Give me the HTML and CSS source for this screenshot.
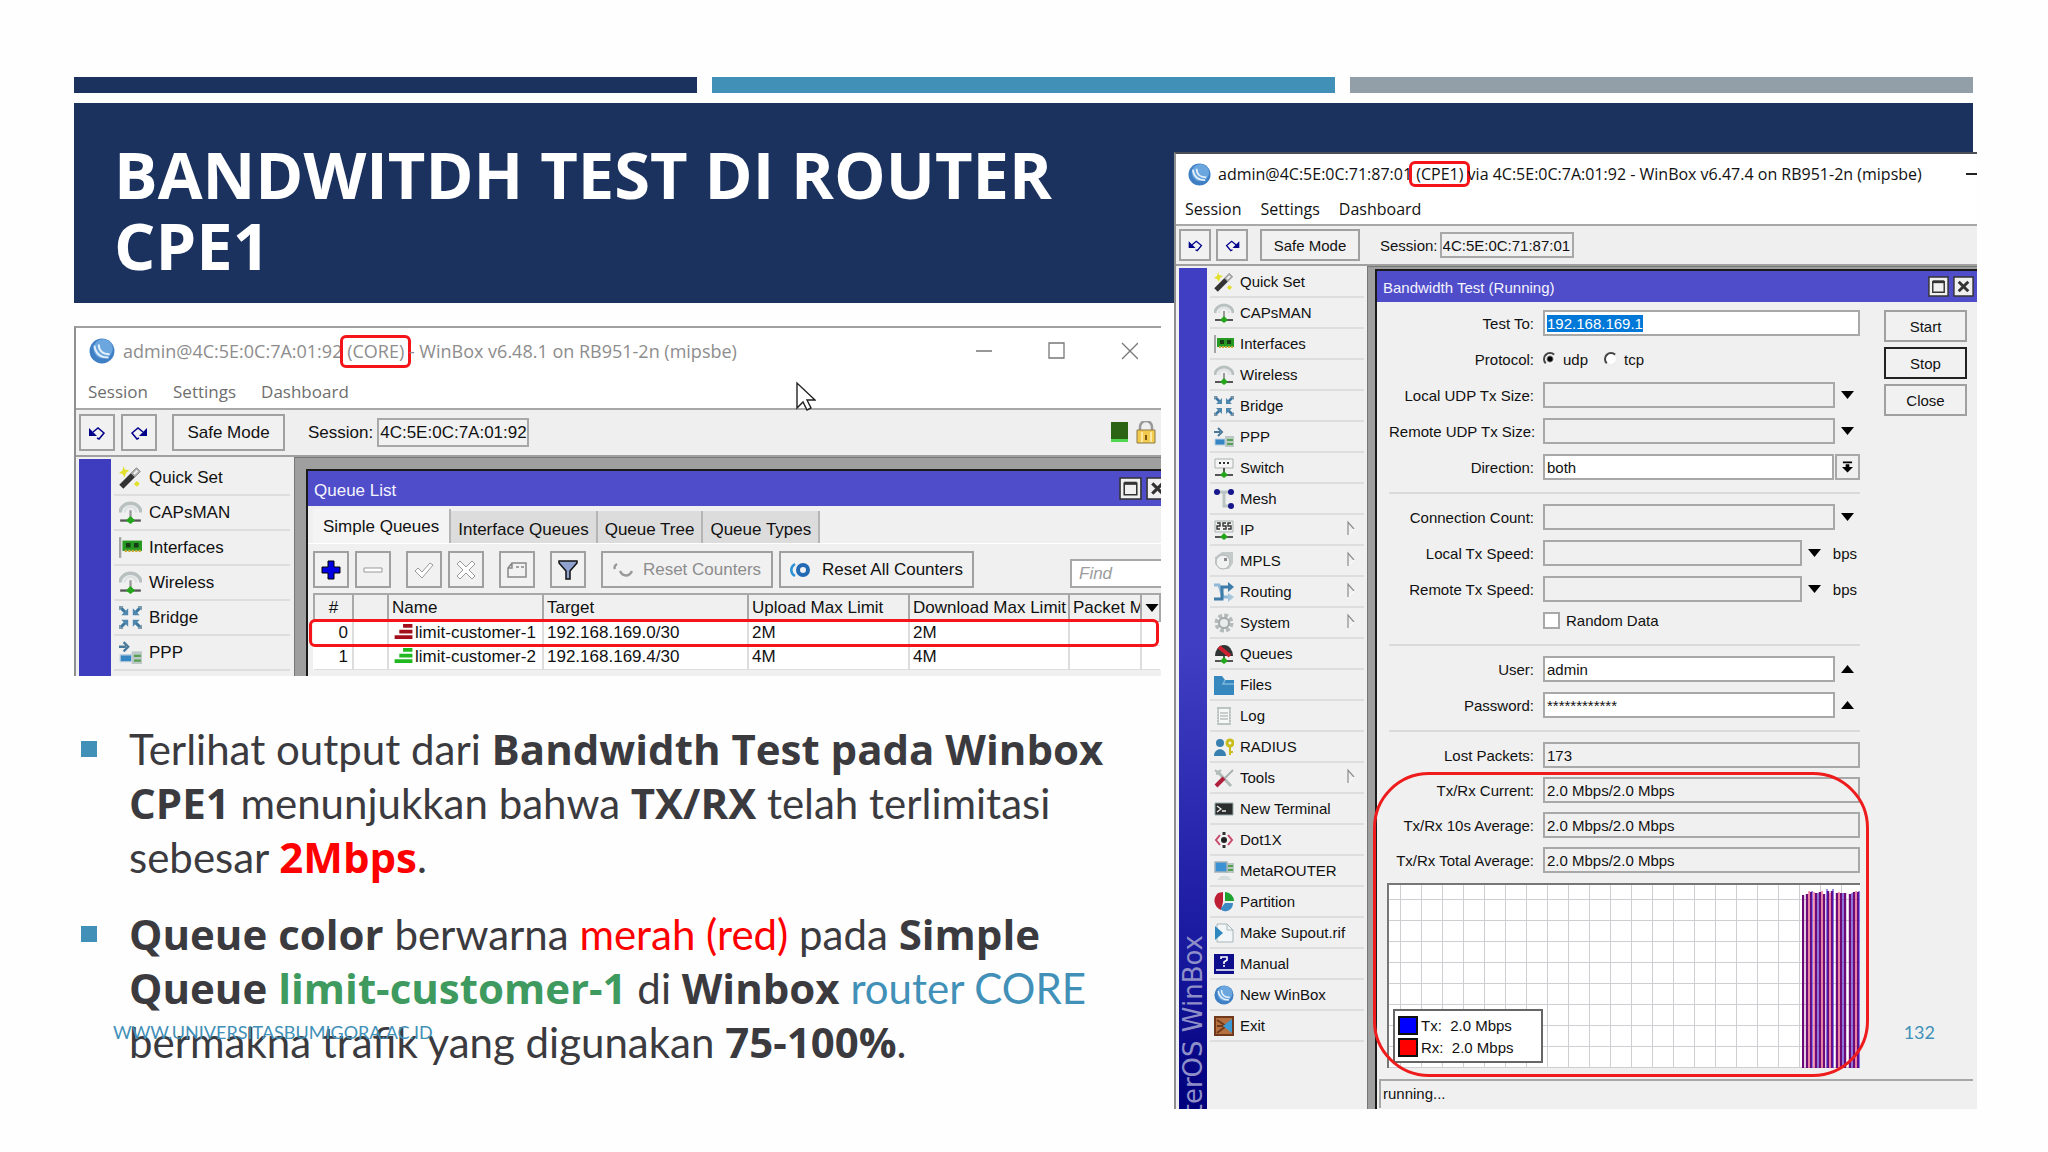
FILE: index.html
```html
<!DOCTYPE html>
<html lang="id">
<head>
  <meta charset="UTF-8">
  <meta name="viewport" content="width=device-width, initial-scale=1.0">
  <title>Bandwitdh Test di Router CPE1</title>
  <link rel="stylesheet" href="styles.css">
</head>
<body>
  <!-- Icon sprite -->
  <svg class="sprite" aria-hidden="true">
    <symbol id="i-logo" viewBox="0 0 24 24">
      <circle cx="12" cy="12" r="11.5" fill="#3f7fc4"/>
      <circle cx="13" cy="10" r="9" fill="#6ba6de"/>
      <path d="M5 7c1 7 5 11 13 11M9 6c0 6 4 9 10 9" fill="none" stroke="#e4f1fb" stroke-width="1.8"/>
    </symbol>
    <symbol id="i-undo" viewBox="0 0 20 20">
      <path d="M2 5v8h8z" fill="#00008b"/>
      <path d="M6 9l5-4 6 5-5 6-2-1" fill="none" stroke="#00008b" stroke-width="1.5"/>
    </symbol>
    <symbol id="i-redo" viewBox="0 0 20 20">
      <path d="M18 5v8h-8z" fill="#00008b"/>
      <path d="M14 9L9 5l-6 5 5 6 2-1" fill="none" stroke="#00008b" stroke-width="1.5"/>
    </symbol>
    <symbol id="i-wand" viewBox="0 0 20 20">
      <path d="M2 18L17 3" stroke="#333" stroke-width="5"/>
      <path d="M12 8l5-5" stroke="#aaa" stroke-width="5"/>
      <path d="M13 7l3-3" stroke="#eee" stroke-width="2"/>
      <path d="M4 0l1 3 4 1-3 2-1 4-2-3-3-1 3-2zM15 13l3 2-2 3-3-2z" fill="#e3e02c"/>
    </symbol>
    <symbol id="i-wifi" viewBox="0 0 20 20">
      <path d="M1 10a9 8 0 0 1 18 0" fill="none" stroke="#b9c0c0" stroke-width="3"/>
      <path d="M5 10a5 5 0 0 1 10 0" fill="none" stroke="#dde2e2" stroke-width="2"/>
      <path d="M10 8v8" stroke="#999" stroke-width="2"/>
      <path d="M1 17h18" stroke="#555" stroke-width="2"/>
      <path d="M6 17l4-4 4 4-4 3z" fill="#25a51c"/>
    </symbol>
    <symbol id="i-card" viewBox="0 0 20 20">
      <path d="M1 1v18" stroke="#a5a5a5" stroke-width="2"/>
      <path d="M3 4h17v9H3z" fill="#269a23"/>
      <path d="M6 6h4v4H6zM13 6h4v4h-4z" fill="#173d16"/>
      <path d="M5 13h14" stroke="#caa93a" stroke-width="2" stroke-dasharray="2 1"/>
    </symbol>
    <symbol id="i-bridge" viewBox="0 0 20 20">
      <path d="M1 1l6 6M19 1l-6 6M1 19l6-6M19 19l-6-6" stroke="#3d779f" stroke-width="2.6"/>
      <path d="M8 2v6H2zM12 2v6h6zM8 18v-6H2zM12 18v-6h6z" fill="#4f87ae"/>
      <path d="M0 0h4L0 4zM20 0h-4l4 4zM0 20h4l-4-4zM20 20h-4l4-4z" fill="#7c98a9"/>
    </symbol>
    <symbol id="i-ppp" viewBox="0 0 20 20">
      <path d="M0 5h6M4 1l4 4-4 4" fill="none" stroke="#4a7898" stroke-width="2"/>
      <path d="M11 9h9v11h-9z" fill="#bcc8c6"/>
      <path d="M13 13h6M13 17h6" stroke="#58a052" stroke-width="2"/>
      <path d="M1 12h10v6H1z" fill="#3686c4" stroke="#bcd0df"/>
    </symbol>
    <symbol id="i-switch" viewBox="0 0 20 20">
      <path d="M1 1h18v9H1z" fill="#f5f5f5" stroke="#a9b2b0"/>
      <path d="M5 5h2M9 5h2M13 5h2" stroke="#333" stroke-width="2"/>
      <path d="M10 10v6M1 17h18" stroke="#555" stroke-width="2"/>
      <path d="M6 17l4-4 4 4-4 3z" fill="#25a51c"/>
    </symbol>
    <symbol id="i-mesh" viewBox="0 0 20 20">
      <path d="M3 3h14M10 3v14h7" fill="none" stroke="#b9c4c3" stroke-width="3"/>
      <circle cx="3" cy="3" r="3" fill="#15158c"/>
      <circle cx="17" cy="3" r="3" fill="#15158c"/>
      <circle cx="17" cy="17" r="3" fill="#15158c"/>
    </symbol>
    <symbol id="i-ip" viewBox="0 0 20 20">
      <path d="M1 1h18v11H1z" fill="#edf0ef" stroke="#a9b2b0"/>
      <path d="M3 3h3v3H3v3h3M12 3H9v3h3v3H9M17 3h-3v3h3v3h-3" fill="none" stroke="#333" stroke-width="1.4"/>
      <path d="M1 17h18" stroke="#555" stroke-width="2"/>
      <path d="M6 17l4-4 4 4-4 3z" fill="#25a51c"/>
    </symbol>
    <symbol id="i-mpls" viewBox="0 0 20 20">
      <path d="M8 1h11v11l-4 6H6l-5-5V6z" fill="#c3c9c8"/>
      <circle cx="9" cy="11" r="7" fill="#f0f2f2" stroke="#adb4b3"/>
      <path d="M10 7h3v3h-3z" fill="#888"/>
    </symbol>
    <symbol id="i-routing" viewBox="0 0 20 20">
      <path d="M0 3h5l4 12h7" fill="none" stroke="#8fb9d6" stroke-width="3"/>
      <path d="M0 17h8V5h7" fill="none" stroke="#3d7ba8" stroke-width="3"/>
      <path d="M14 0l6 5-6 5z" fill="#3d7ba8"/>
      <path d="M14 11l6 4-6 5z" fill="#a4c5da"/>
    </symbol>
    <symbol id="i-gear" viewBox="0 0 20 20">
      <circle cx="10" cy="10" r="7" fill="none" stroke="#b3bab9" stroke-width="5" stroke-dasharray="3.5 2"/>
      <circle cx="10" cy="10" r="5" fill="#e9ecec" stroke="#a3aaa9" stroke-width="2"/>
    </symbol>
    <symbol id="i-queues" viewBox="0 0 20 20">
      <path d="M1 12a9 11 0 0 1 18 0z" fill="#303434"/>
      <path d="M5 3l11 9" stroke="#cf2030" stroke-width="4"/>
      <path d="M1 17h18M10 12v4" stroke="#555" stroke-width="2"/>
      <path d="M6 17l4-4 4 4-4 3z" fill="#25a51c"/>
    </symbol>
    <symbol id="i-files" viewBox="0 0 20 20">
      <path d="M0 1h8l3 4h9v15H0z" fill="#3687bd"/>
      <path d="M11 5l-2 4h11" fill="none" stroke="#7cb8de" stroke-width="1.5"/>
    </symbol>
    <symbol id="i-log" viewBox="0 0 20 20">
      <path d="M3 1h14v18H3z" fill="#bcc4c1"/>
      <path d="M5 3h10v14H5z" fill="#f6f8f7"/>
      <path d="M3 4v14M17 4v14" stroke="#f0f0f0" stroke-width="1.5" stroke-dasharray="1 2"/>
      <path d="M6 7h8M6 10h8M6 13h8" stroke="#9ca5a2"/>
    </symbol>
    <symbol id="i-radius" viewBox="0 0 20 20">
      <circle cx="6" cy="6" r="4" fill="#3880b0"/>
      <path d="M0 19c0-9 12-9 12 0z" fill="#3880b0"/>
      <circle cx="16" cy="6" r="3" fill="none" stroke="#c8bd1c" stroke-width="3"/>
      <path d="M16 9v9M16 15h3" stroke="#c8bd1c" stroke-width="2"/>
    </symbol>
    <symbol id="i-tools" viewBox="0 0 20 20">
      <path d="M3 3l14 15" stroke="#b2bbb9" stroke-width="3"/>
      <path d="M1 2l3 3 3-3M2 6l4-1" stroke="#b2bbb9" stroke-width="2" fill="none"/>
      <path d="M19 2l-9 9" stroke="#aab2b0" stroke-width="2"/>
      <path d="M2 18l8-8" stroke="#b01f3c" stroke-width="4"/>
    </symbol>
    <symbol id="i-term" viewBox="0 0 20 20">
      <path d="M1 4h18v12H1z" fill="#2b2d2d" stroke="#9aa" stroke-width="1"/>
      <path d="M3 7l4 3-4 3M8 12h4" fill="none" stroke="#eee" stroke-width="1.3"/>
    </symbol>
    <symbol id="i-dot1x" viewBox="0 0 20 20">
      <path d="M6 5l-4 5 4 5M14 5l4 5-4 5" fill="none" stroke="#c8476a" stroke-width="2"/>
      <circle cx="10" cy="10" r="3" fill="#222"/>
      <path d="M10 2v3M10 15v3" stroke="#333" stroke-width="3"/>
    </symbol>
    <symbol id="i-meta" viewBox="0 0 20 20">
      <path d="M12 2h8v10h-8z" fill="#b7c7c2"/>
      <path d="M14 5h5M14 9h5" stroke="#54a052" stroke-width="2"/>
      <path d="M1 1h12v10H1z" fill="#3b91d2" stroke="#a3b3bb" stroke-width="1.5"/>
      <path d="M7 15h7l4 4H3z" fill="#d7dddc"/>
    </symbol>
    <symbol id="i-part" viewBox="0 0 20 20">
      <path d="M9 10L7 18A10 10 0 0 1 4 1L9 0z" fill="#bd2035"/>
      <path d="M11 0a9 9 0 0 1 9 9h-9z" fill="#1fa22f"/>
      <path d="M19 11c0 10-13 10-12 5l4-5z" fill="#3b8ac4"/>
    </symbol>
    <symbol id="i-supout" viewBox="0 0 20 20">
      <path d="M3 1h10l6 6v12H3z" fill="#f2f6f6" stroke="#a8b6b8"/>
      <path d="M13 1v6h6" fill="none" stroke="#a8b6b8"/>
      <path d="M1 3l8 7-8 7z" fill="#2e87bd"/>
    </symbol>
    <symbol id="i-manual" viewBox="0 0 20 20">
      <path d="M0 0h20v20H0z" fill="#0e0e8c"/>
      <path d="M7 5V3h6v3l-3 2v2M9 12h2M2 16h18" fill="none" stroke="#fff" stroke-width="1.6"/>
    </symbol>
    <symbol id="i-exit" viewBox="0 0 20 20">
      <path d="M0 0h20v20H0z" fill="#70391b"/>
      <path d="M2 2h16v16H2z" fill="#b5703f"/>
      <path d="M3 4l9 6-9 7M3 10h6" fill="none" stroke="#70391b" stroke-width="2"/>
      <path d="M9 10l9-7v14z" fill="#3b9ad6"/>
    </symbol>
    <symbol id="i-sub" viewBox="0 0 10 16">
      <path d="M2 15V2l6 7" fill="none" stroke="#8d8d8d" stroke-width="1.2"/>
      <path d="M8 9l-5 5" stroke="#fff"/>
    </symbol>
    <symbol id="i-down" viewBox="0 0 13 8"><path d="M0 0h13L6.500 8z" fill="#000"/></symbol>
    <symbol id="i-up" viewBox="0 0 13 8"><path d="M0 8h13L6.500 0z" fill="#000"/></symbol>
    <symbol id="i-restore" viewBox="0 0 22 22">
      <path d="M1 1h20v20H1z" fill="#f0f0f0" stroke="#333" stroke-width="1.5"/>
      <path d="M5 6h12v11H5z" fill="none" stroke="#333" stroke-width="1.5"/>
      <path d="M5 6h12" stroke="#333" stroke-width="3"/>
    </symbol>
    <symbol id="i-close" viewBox="0 0 22 22">
      <path d="M1 1h20v20H1z" fill="#f0f0f0" stroke="#333" stroke-width="1.5"/>
      <path d="M6 6l10 10M16 6L6 16" stroke="#333" stroke-width="3"/>
    </symbol>
  </svg>

  <main class="slide">
    <div class="bars">
      <div class="bar bar-navy"></div>
      <div class="bar bar-blue"></div>
      <div class="bar bar-gray"></div>
    </div>

    <div class="stage">
      <header class="heading">
        <h1>BANDWITDH TEST DI ROUTER CPE1</h1>
      </header>

      <!-- WinBox CORE -->
      <section class="win win-core">
        <div class="titlebar">
          <svg class="logo"><use href="#i-logo"/></svg>
          <span class="title">admin@4C:5E:0C:7A:01:92 <span class="mark">(CORE)</span> - WinBox v6.48.1 on RB951-2n (mipsbe)</span>
          <svg class="controls" viewBox="0 0 162 20" fill="none" stroke="#777" stroke-width="1.300">
            <path d="M0 10h16M73 2h15v15H73zM146 2l16 16M162 2l-16 16"/>
          </svg>
        </div>
        <nav class="menu"><a href="#">Session</a><a href="#">Settings</a><a href="#">Dashboard</a></nav>
        <div class="toolbar">
          <button class="btn sq" aria-label="Undo"><svg><use href="#i-undo"/></svg></button>
          <button class="btn sq" aria-label="Redo"><svg><use href="#i-redo"/></svg></button>
          <button class="btn safe">Safe Mode</button>
          <label for="core-session">Session:</label>
          <input id="core-session" class="session" type="text" value="4C:5E:0C:7A:01:92" readonly>
          <svg class="status" viewBox="0 0 46 24">
            <path d="M0 1h17v20H0z" fill="#2a6414"/>
            <path d="M0 18h17v3H0z" fill="#4fd84f"/>
            <path d="M29 11V6a6 6 0 0 1 12 0v5" fill="none" stroke="#999" stroke-width="2.500"/>
            <path d="M26 9h18v13H26z" fill="#f2cb4e" stroke="#8c7a45"/>
            <path d="M31 11v10M40 11v10" stroke="#fae9a2" stroke-width="2"/>
            <path d="M35 14v5" stroke="#7a5410" stroke-width="2"/>
          </svg>
        </div>
        <div class="body">
          <div class="strip"></div>
          <nav class="side">
            <a href="#"><svg><use href="#i-wand"/></svg>Quick Set</a>
            <a href="#"><svg><use href="#i-wifi"/></svg>CAPsMAN</a>
            <a href="#"><svg><use href="#i-card"/></svg>Interfaces</a>
            <a href="#"><svg><use href="#i-wifi"/></svg>Wireless</a>
            <a href="#"><svg><use href="#i-bridge"/></svg>Bridge</a>
            <a href="#"><svg><use href="#i-ppp"/></svg>PPP</a>
          </nav>
          <div class="mdi">
            <div class="child">
              <div class="child-title">
                <span>Queue List</span>
                <button aria-label="Maximize"><svg><use href="#i-restore"/></svg></button>
                <button aria-label="Close"><svg><use href="#i-close"/></svg></button>
              </div>
              <div class="tabs">
                <button class="tab active">Simple Queues</button>
                <button class="tab">Interface Queues</button>
                <button class="tab">Queue Tree</button>
                <button class="tab">Queue Types</button>
              </div>
              <div class="tools">
                <button class="btn sq" aria-label="Add"><svg viewBox="0 0 20 20"><path d="M7 1h6v6h6v6h-6v6H7v-6H1V7h6z" fill="#0000e0" stroke="#000"/></svg></button>
                <button class="btn sq" aria-label="Remove"><svg viewBox="0 0 20 20"><path d="M1 8h18v4H1z" fill="#fff" stroke="#999"/></svg></button>
                <button class="btn sq lead" aria-label="Enable"><svg viewBox="0 0 20 20"><path d="M1 11l3-3 4 4 8-9 3 2L8 18z" fill="#fff" stroke="#999"/></svg></button>
                <button class="btn sq" aria-label="Disable"><svg viewBox="0 0 20 20"><path d="M1 4l3-3 6 6 6-6 3 3-6 6 6 6-3 3-6-6-6 6-3-3 6-6z" fill="#fff" stroke="#999"/></svg></button>
                <button class="btn sq lead" aria-label="Comment"><svg viewBox="0 0 20 20"><path d="M5 3h14v14H1V8zM5 3v5H1M9 7h3M14 7h3" fill="none" stroke="#888" stroke-width="1.500"/></svg></button>
                <button class="btn sq lead" aria-label="Filter"><svg viewBox="0 0 20 20"><path d="M1 1h18v2l-7 8v8H8v-8L1 3z" fill="#8fa2cf" stroke="#111" stroke-width="1.500"/></svg></button>
                <button class="btn reset lead" disabled><svg viewBox="0 0 20 20"><path d="M4 4C2 5 1 7 2 9M7 11c3 6 9 6 12 0" fill="none" stroke="#999" stroke-width="2.500"/></svg>Reset Counters</button>
                <button class="btn reset reset-all"><svg viewBox="0 0 20 20"><path d="M5 4C0 7 0 13 5 16" fill="none" stroke="#2b93d6" stroke-width="2.500"/><circle cx="13" cy="10" r="5" fill="none" stroke="#2269b4" stroke-width="4"/></svg>Reset All Counters</button>
                <input class="find" type="text" placeholder="Find" aria-label="Find">
              </div>
              <div class="table-wrap">
                <table>
                  <colgroup><col class="c-num"><col class="c-flag"><col class="c-name"><col class="c-target"><col class="c-up"><col class="c-down"><col><col class="c-arrow"></colgroup>
                  <thead>
                    <tr><th class="num">#</th><th></th><th>Name</th><th>Target</th><th>Upload Max Limit</th><th>Download Max Limit</th><th>Packet M</th><th class="pick"><svg><use href="#i-down"/></svg></th></tr>
                  </thead>
                  <tbody>
                    <tr><td class="num">0</td><td></td><td class="name"><svg viewBox="0 0 20 16" fill="#a3101c"><path d="M9 0h10v4H9zM5 6h14v4H5zM0 12h19v4H0z"/></svg>limit-customer-1</td><td>192.168.169.0/30</td><td>2M</td><td>2M</td><td></td><td></td></tr>
                    <tr><td class="num">1</td><td></td><td class="name"><svg viewBox="0 0 20 16" fill="#22b822"><path d="M9 0h10v4H9zM5 6h14v4H5zM0 12h19v4H0z"/></svg>limit-customer-2</td><td>192.168.169.4/30</td><td>4M</td><td>4M</td><td></td><td></td></tr>
                  </tbody>
                </table>
                <div class="mark-row"></div>
              </div>
            </div>
          </div>
        </div>
        <svg class="cursor" viewBox="0 0 20 30"><path d="M1 1v25l6-6 4 8 4-2-4-8h8z" fill="#fff" stroke="#222" stroke-width="1.400"/></svg>
      </section>

      <ul class="points">
        <li>Terlihat output dari <b>Bandwidth Test pada Winbox CPE1</b> menunjukkan bahwa <b>TX/RX</b> telah terlimitasi sebesar <b class="red">2Mbps</b>.</li>
        <li><b>Queue color</b> berwarna <span class="red">merah (red)</span> pada <b>Simple Queue <span class="green">limit-customer-1</span></b> di <b>Winbox</b> <span class="blue">router CORE</span> bermakna trafik yang digunakan <b>75-100%</b>.</li>
      </ul>

      <!-- WinBox CPE1 -->
      <section class="win win-cpe">
        <div class="titlebar">
          <svg class="logo"><use href="#i-logo"/></svg>
          <span class="title">admin@4C:5E:0C:71:87:01 <span class="mark">(CPE1)</span> via 4C:5E:0C:7A:01:92 - WinBox v6.47.4 on RB951-2n (mipsbe)</span>
          <svg class="minimize" viewBox="0 0 11 2"><path d="M0 0h11v2H0z" fill="#222"/></svg>
        </div>
        <nav class="menu"><a href="#">Session</a><a href="#">Settings</a><a href="#">Dashboard</a></nav>
        <div class="toolbar">
          <button class="btn sq" aria-label="Undo"><svg><use href="#i-undo"/></svg></button>
          <button class="btn sq" aria-label="Redo"><svg><use href="#i-redo"/></svg></button>
          <button class="btn safe">Safe Mode</button>
          <label for="cpe-session">Session:</label>
          <input id="cpe-session" class="session" type="text" value="4C:5E:0C:71:87:01" readonly>
        </div>
        <div class="body">
          <div class="strip"><span class="brand">RouterOS WinBox</span></div>
          <nav class="side">
            <a href="#"><svg><use href="#i-wand"/></svg>Quick Set</a>
            <a href="#"><svg><use href="#i-wifi"/></svg>CAPsMAN</a>
            <a href="#"><svg><use href="#i-card"/></svg>Interfaces</a>
            <a href="#"><svg><use href="#i-wifi"/></svg>Wireless</a>
            <a href="#"><svg><use href="#i-bridge"/></svg>Bridge</a>
            <a href="#"><svg><use href="#i-ppp"/></svg>PPP</a>
            <a href="#"><svg><use href="#i-switch"/></svg>Switch</a>
            <a href="#"><svg><use href="#i-mesh"/></svg>Mesh</a>
            <a href="#"><svg><use href="#i-ip"/></svg>IP<svg class="sub"><use href="#i-sub"/></svg></a>
            <a href="#"><svg><use href="#i-mpls"/></svg>MPLS<svg class="sub"><use href="#i-sub"/></svg></a>
            <a href="#"><svg><use href="#i-routing"/></svg>Routing<svg class="sub"><use href="#i-sub"/></svg></a>
            <a href="#"><svg><use href="#i-gear"/></svg>System<svg class="sub"><use href="#i-sub"/></svg></a>
            <a href="#"><svg><use href="#i-queues"/></svg>Queues</a>
            <a href="#"><svg><use href="#i-files"/></svg>Files</a>
            <a href="#"><svg><use href="#i-log"/></svg>Log</a>
            <a href="#"><svg><use href="#i-radius"/></svg>RADIUS</a>
            <a href="#"><svg><use href="#i-tools"/></svg>Tools<svg class="sub"><use href="#i-sub"/></svg></a>
            <a href="#"><svg><use href="#i-term"/></svg>New Terminal</a>
            <a href="#"><svg><use href="#i-dot1x"/></svg>Dot1X</a>
            <a href="#"><svg><use href="#i-meta"/></svg>MetaROUTER</a>
            <a href="#"><svg><use href="#i-part"/></svg>Partition</a>
            <a href="#"><svg><use href="#i-supout"/></svg>Make Supout.rif</a>
            <a href="#"><svg><use href="#i-manual"/></svg>Manual</a>
            <a href="#"><svg><use href="#i-logo"/></svg>New WinBox</a>
            <a href="#"><svg><use href="#i-exit"/></svg>Exit</a>
          </nav>
          <div class="mdi">
            <div class="child">
              <div class="child-title">
                <span>Bandwidth Test (Running)</span>
                <button aria-label="Maximize"><svg><use href="#i-restore"/></svg></button>
                <button aria-label="Close"><svg><use href="#i-close"/></svg></button>
              </div>
              <div class="panel">
                <form class="form">
                  <div class="group">
                    <div class="row"><label for="test-to">Test To:</label><input id="test-to" type="text" value="192.168.169.1"></div>
                    <div class="row">
                      <span class="lbl">Protocol:</span>
                      <input id="udp" type="radio" name="protocol" checked><label class="opt" for="udp">udp</label>
                      <input id="tcp" type="radio" name="protocol"><label class="opt" for="tcp">tcp</label>
                    </div>
                    <div class="row"><label for="ludp">Local UDP Tx Size:</label><input id="ludp" class="off" type="text"><button type="button" class="arrow" aria-label="Expand"><svg><use href="#i-down"/></svg></button></div>
                    <div class="row"><label for="rudp">Remote UDP Tx Size:</label><input id="rudp" class="off" type="text"><button type="button" class="arrow" aria-label="Expand"><svg><use href="#i-down"/></svg></button></div>
                    <div class="row"><label for="dir">Direction:</label><select id="dir"><option>both</option></select><button type="button" class="drop" aria-label="Open"><svg viewBox="0 0 12 12"><path d="M1 0h10v2H1zM4 3h4v3h4l-6 6-6-6h4z"/></svg></button></div>
                  </div>
                  <div class="group">
                    <div class="row"><label for="conn">Connection Count:</label><input id="conn" class="off" type="text"><button type="button" class="arrow" aria-label="Expand"><svg><use href="#i-down"/></svg></button></div>
                    <div class="row"><label for="ltx">Local Tx Speed:</label><input id="ltx" class="off" type="text"><button type="button" class="arrow" aria-label="Expand"><svg><use href="#i-down"/></svg></button><span class="unit">bps</span></div>
                    <div class="row"><label for="rtx">Remote Tx Speed:</label><input id="rtx" class="off" type="text"><button type="button" class="arrow" aria-label="Expand"><svg><use href="#i-down"/></svg></button><span class="unit">bps</span></div>
                    <div class="row short"><span class="lbl"></span><input id="rand" type="checkbox"><label class="opt" for="rand">Random Data</label></div>
                  </div>
                  <div class="group">
                    <div class="row"><label for="user">User:</label><input id="user" type="text" value="admin"><button type="button" class="arrow" aria-label="Collapse"><svg><use href="#i-up"/></svg></button></div>
                    <div class="row"><label for="pass">Password:</label><input id="pass" type="text" value="************"><button type="button" class="arrow" aria-label="Collapse"><svg><use href="#i-up"/></svg></button></div>
                  </div>
                  <div class="group results">
                    <div class="row"><label for="lost">Lost Packets:</label><input id="lost" class="off" type="text" value="173" readonly></div>
                    <div class="row"><label for="cur">Tx/Rx Current:</label><input id="cur" class="off" type="text" value="2.0 Mbps/2.0 Mbps" readonly></div>
                    <div class="row"><label for="avg">Tx/Rx 10s Average:</label><input id="avg" class="off" type="text" value="2.0 Mbps/2.0 Mbps" readonly></div>
                    <div class="row"><label for="tot">Tx/Rx Total Average:</label><input id="tot" class="off" type="text" value="2.0 Mbps/2.0 Mbps" readonly></div>
                    <div class="chart">
                      <div class="legend">
                        <div><i class="tx"></i>Tx:&nbsp; 2.0 Mbps</div>
                        <div><i class="rx"></i>Rx:&nbsp; 2.0 Mbps</div>
                      </div>
                      <svg class="traffic" viewBox="0 0 58 180">
                        <g stroke="#6d0a78" stroke-width="2.400"><path d="M1 7V180M5 6V180M9 4V180M14 5V180M18 4V180M22 6V180M26 3V180M30 3V180M35 5V180M39 5V180M43 5V180M48 6V180M52 4V180M56 4V180"/></g>
                        <path d="M7 3V180M12 4V180M20 3V180M28 5V180M37 4V180M54 3V180" stroke="#f03a68"/>
                        <path d="M10 3V180M16 5V180M25 1V180M31 1V180M41 5V180M50 5V180M57 3V180" stroke="#3a20d0"/>
                      </svg>
                    </div>
                    <div class="mark-box"></div>
                  </div>
                </form>
                <div class="actions">
                  <button class="btn">Start</button>
                  <button class="btn current">Stop</button>
                  <button class="btn">Close</button>
                </div>
              </div>
              <div class="statusbar">running...</div>
            </div>
          </div>
        </div>
      </section>
    </div>

    <a class="site" href="#">WWW.UNIVERSITASBUMIGORA.AC.ID</a>
    <span class="page-no">132</span>
  </main>

  <script>
    document.getElementById('test-to').select();
  </script>
</body>
</html>
```
FILE: styles.css
```css
* {
  margin: 0;
  padding: 0;
  box-sizing: border-box;
}

body {
  font-family: Lato, "Open Sans", sans-serif;
  background: #fefefe;
  color: #3b3b3f;
}

a {
  color: inherit;
  text-decoration: none;
}

button, input, select {
  font: inherit;
  color: inherit;
}

button {
  background: none;
  border: none;
  flex: none;
}

svg {
  display: block;
  flex: none;
}

.sprite {
  position: absolute;
  width: 0;
  height: 0;
}

/* ===== Slide ===== */
.slide {
  position: relative;
  min-height: 100vh;
  padding: 77px 75px 0 74px;
}

.bars {
  display: grid;
  grid-template-columns: repeat(3, 1fr);
  gap: 15px;
  margin-bottom: 10px;
}

.bar {
  height: 16px;
}

.bar-navy { background: #1b325f; }
.bar-blue { background: #4190b8; }
.bar-gray { background: #939fa8; }

.stage {
  display: grid;
  grid-template-columns: minmax(0, 1087fr) minmax(0, 799fr);
  grid-template-rows: auto auto 1fr;
  column-gap: 13px;
}

.heading {
  grid-column: 1 / 3;
  grid-row: 1;
  min-height: 200px;
  padding: 36px 40px 22px;
  background: #1b325f;
}

h1 {
  max-width: 1000px;
  font-family: "Open Sans", sans-serif;
  font-size: 65px;
  line-height: 71px;
  color: #fff;
}

.points {
  grid-column: 1;
  grid-row: 3;
  list-style: none;
  margin-top: 46px;
  padding-right: 30px;
  font-size: 42px;
  line-height: 54px;
}

.points b {
  font-family: "Open Sans", sans-serif;
  line-height: 1;
}

.points li {
  position: relative;
  padding-left: 55px;
  margin-bottom: 23px;
}

.points li::before {
  content: "";
  position: absolute;
  left: 7px;
  top: 19px;
  width: 16px;
  height: 16px;
  background: #4190b8;
}

.red { color: #fe0000; }
.green { color: #3f9a60; }
.blue { color: #4190b8; }

.site, .page-no {
  position: absolute;
  top: 1020px;
  font-size: 18px;
  line-height: 24px;
  color: #4190b8;
}

.site { left: 113px; }
.page-no { right: 113px; }

/* ===== WinBox window ===== */
.win {
  position: relative;
  overflow: hidden;
  background: #fff;
  border-left: 2px solid #8f8f8f;
  border-top: 2px solid #a0a0a0;
  font-family: "Liberation Sans", Arial, sans-serif;
  color: #111;
}

.win-core {
  grid-column: 1;
  grid-row: 2;
  margin-top: 23px;
  font-size: 17px;
}

.win-cpe {
  grid-column: 2;
  grid-row: 1 / 4;
  margin: 49px -4px 0 0;
  font-size: 15px;
  display: flex;
  flex-direction: column;
  border-top-color: #4a4f58;
}

.titlebar, .menu {
  display: flex;
  align-items: center;
  font-family: "Open Sans", "Noto Sans", sans-serif;
  white-space: nowrap;
}

.titlebar {
  height: 46px;
  padding-left: 13px;
  font-size: 18px;
}

.win-core .titlebar {
  gap: 8px;
  color: #8d8d8d;
}

.win-cpe .titlebar {
  height: 40px;
  padding-left: 12px;
  gap: 7px;
  font-size: 16px;
}

.logo {
  width: 26px;
  height: 26px;
}

.win-cpe .logo {
  width: 23px;
  height: 23px;
}

.title {
  flex: 1;
}

.mark {
  display: inline-block;
  padding: 0 4px;
  margin: 0 -4px;
  line-height: 27px;
  outline: 3px solid #f5141a;
  border-radius: 3px;
}

.win-cpe .mark {
  line-height: 20px;
}

.controls {
  width: 162px;
  height: 20px;
  margin-right: 23px;
}

.minimize {
  width: 11px;
  height: 2px;
}

.menu {
  height: 34px;
  gap: 25px;
  padding-left: 12px;
}

.win-core .menu {
  color: #6e6e6e;
}

.win-cpe .menu {
  height: 30px;
  gap: 19px;
  padding-left: 9px;
  font-size: 16px;
}

.toolbar {
  display: flex;
  align-items: center;
  height: 49px;
  padding-left: 3px;
  background: #f0eff0;
  border-top: 2px solid #a8a8a8;
  border-bottom: 2px solid #a0a0a0;
}

.win-cpe .toolbar {
  height: 42px;
}

.btn {
  display: flex;
  align-items: center;
  justify-content: center;
  height: 37px;
  background: #f2f1f2;
  border: 2px solid #a0a0a0;
}

.sq {
  width: 36px;
  margin-right: 6px;
}

.sq svg {
  width: 20px;
  height: 20px;
}

.safe {
  width: 113px;
  margin: 0 23px 0 9px;
}

.session {
  width: 152px;
  height: 29px;
  margin-left: 4px;
  padding-left: 1px;
  background: #f2f1f2;
  border: 2px solid #a8a8a8;
}

.win-cpe .btn { height: 32px; }
.win-cpe .sq { width: 32px; margin-right: 5px; }
.win-cpe .sq svg { width: 17px; height: 17px; }
.win-cpe .safe { width: 100px; margin: 0 20px 0 7px; }
.win-cpe .session { width: 134px; height: 26px; margin-left: 2px; }

.status {
  width: 46px;
  height: 24px;
  margin: 0 4px 0 auto;
}

.body {
  display: flex;
  flex: 1;
  background: #f0f0f0;
}

.strip {
  position: relative;
  flex: none;
  width: 32px;
  margin: 2px 0 0 3px;
  background: #3f3dbf;
  overflow: hidden;
}

.win-cpe .strip {
  width: 28px;
  background: linear-gradient(#403fc4 45%, #1a1aa0 80%, #00007c);
}

.brand {
  position: absolute;
  left: 0;
  bottom: -55px;
  writing-mode: vertical-rl;
  transform: rotate(180deg);
  font-family: "DejaVu Sans", sans-serif;
  font-size: 26px;
  line-height: 28px;
  color: #8f8fc8;
  white-space: nowrap;
}

.side {
  flex: none;
  width: 183px;
  padding: 4px 4px 5px 3px;
}

.side a {
  display: flex;
  align-items: center;
  gap: 7px;
  height: 35px;
  padding-left: 5px;
  border-bottom: 2px solid #dedede;
}

.side svg {
  width: 23px;
  height: 23px;
}

.win-cpe .side {
  width: 160px;
  padding: 1px 3px 0;
}

.win-cpe .side a {
  height: 31px;
  gap: 6px;
  padding-left: 4px;
}

.win-cpe .side svg {
  width: 20px;
  height: 20px;
}

.win-cpe .side .sub {
  width: 10px;
  height: 16px;
  margin: 0 8px 4px auto;
}

/* ===== Child windows ===== */
.mdi {
  flex: 1;
  min-width: 0;
  padding: 12px 0 0 12px;
  background: #9f9f9f;
  box-shadow: inset 1px 1px 0 #777;
}

.win-cpe .mdi {
  display: flex;
  padding: 3px 0 0 8px;
}

.child {
  flex: 1;
  min-width: 0;
  height: 100%;
  border-left: 2px solid #1a1a1a;
  border-top: 2px solid #1a1a1a;
  background: #f0f0f0;
  overflow: hidden;
}

.win-cpe .child {
  display: flex;
  flex-direction: column;
  height: auto;
  overflow: visible;
}

.child-title {
  display: flex;
  align-items: center;
  gap: 4px;
  height: 35px;
  padding-left: 6px;
  margin-right: -8px;
  background: #4f4dc9;
  color: #f4f4ff;
}

.child-title span {
  flex: 1;
  padding-top: 4px;
}

.child-title svg {
  width: 23px;
  height: 23px;
}

.win-cpe .child-title {
  height: 31px;
  margin-right: 0;
  padding-right: 3px;
}

.win-cpe .child-title span {
  padding-top: 2px;
}

.win-cpe .child-title svg {
  width: 21px;
  height: 21px;
}

.tabs {
  display: flex;
  align-items: flex-end;
  height: 38px;
  padding-left: 5px;
  border-bottom: 1px solid #fff;
}

.tab {
  height: 32px;
  padding: 5px 7px 0;
  background: #dcdcdc;
  border-right: 2px solid #b5b5b5;
  white-space: nowrap;
}

.tab.active {
  height: 34px;
  padding: 2px 10px 0;
  background: #f4f4f4;
}

.tools {
  display: flex;
  padding: 7px 0 5px 5px;
}

.tools .lead {
  margin-left: 9px;
}

.reset {
  width: 172px;
  gap: 10px;
  margin-right: 6px;
  white-space: nowrap;
}

.reset svg {
  width: 20px;
  height: 20px;
}

.reset:disabled {
  color: #8c8c8c;
}

.reset-all {
  width: 195px;
  gap: 12px;
}

.find {
  width: 91px;
  height: 29px;
  margin: 8px 0 0 auto;
  padding-left: 7px;
  border: 2px solid #a8a8a8;
  border-right: none;
}

.find::placeholder {
  color: #9c9c9c;
  font-style: italic;
}

.table-wrap {
  position: relative;
  margin-left: 5px;
  background: #fff;
}

table {
  width: 100%;
  table-layout: fixed;
  border-collapse: collapse;
}

th, td {
  height: 24px;
  padding: 0 0 0 3px;
  line-height: 22px;
  font-weight: normal;
  text-align: left;
  white-space: nowrap;
  overflow: hidden;
  border-right: 2px solid #ddd;
  border-bottom: 1px solid #ddd;
}

th {
  height: 27px;
  background: #f0f0f0;
  border: 2px solid #a8a8a8;
  border-bottom-width: 1px;
}

td:last-child { border-right: none; }
.c-num { width: 39px; }
.c-flag { width: 35px; }
.c-name { width: 155px; }
.c-target { width: 205px; }
.c-up { width: 161px; }
.c-down { width: 160px; }
.c-arrow { width: 19px; }

th.num {
  padding: 0;
  text-align: center;
}

td.num {
  padding-right: 4px;
  text-align: right;
}

.pick svg {
  width: 14px;
  height: 8px;
}

.name svg {
  display: inline-block;
  width: 20px;
  height: 15px;
  margin: 0 1px 0 2px;
  vertical-align: -1px;
}

.mark-row {
  position: absolute;
  left: -4px;
  right: 2px;
  top: 26px;
  height: 28px;
  border: 3px solid #f5141a;
  border-radius: 6px;
}

.cursor {
  position: absolute;
  left: 720px;
  top: 53px;
  width: 20px;
  height: 32px;
}

/* ===== Bandwidth test ===== */
.panel {
  display: flex;
  flex: 1;
  gap: 24px;
  padding: 8px 10px 11px 12px;
}

.form {
  flex: 1;
  min-width: 0;
}

.group {
  position: relative;
  display: flex;
  flex-direction: column;
  gap: 10px;
  padding-bottom: 12px;
  margin-bottom: 10px;
  border-bottom: 2px solid #dadada;
}

.row {
  display: flex;
  align-items: center;
  height: 26px;
}

.row.short {
  align-items: flex-start;
  height: 20px;
}

.row label:first-child, .lbl {
  width: 145px;
  margin-right: 9px;
  text-align: right;
  white-space: nowrap;
}

.row input[type="text"], .row select {
  flex: 1;
  min-width: 0;
  height: 26px;
  padding: 0 2px;
  border: 2px solid #a8a8a8;
  background: #fff;
  outline: none;
  appearance: none;
  border-radius: 0;
}

.row input.off {
  background: #f0f0f0;
}

.row input::selection {
  background: #0078d7;
  color: #fff;
}

.row input[type="radio"] {
  appearance: none;
  width: 14px;
  height: 14px;
  border: 2px solid #444;
  border-right-color: #eee;
  border-bottom-color: #eee;
  border-radius: 50%;
  background: #fff;
}

.row input[type="radio"]:checked {
  background: radial-gradient(#000 2px, #fff 4px);
}

.row input[type="checkbox"] {
  appearance: none;
  width: 17px;
  height: 17px;
  border: 2px solid #a8a8a8;
  background: #fff;
}

.opt {
  margin: 0 16px 0 6px;
}

.arrow {
  display: flex;
  justify-content: center;
  width: 25px;
}

.arrow svg {
  width: 13px;
  height: 8px;
}

.unit {
  width: 33px;
  padding-right: 3px;
  text-align: right;
}

.drop {
  display: flex;
  align-items: center;
  justify-content: center;
  width: 25px;
  height: 26px;
  margin-left: 1px;
  border: 2px solid #a8a8a8;
}

.drop svg {
  width: 11px;
  height: 12px;
}

.results {
  gap: 9px;
  border-bottom: none;
  padding: 0;
  margin: 0;
}

.chart {
  display: flex;
  align-items: flex-end;
  justify-content: space-between;
  height: 185px;
  margin: 1px 0 0 -2px;
  border-left: 2px solid #777;
  border-top: 2px solid #777;
  background:
    linear-gradient(90deg, #cfced2 1px, transparent 1px) 11px 0 / 21px 21px,
    linear-gradient(#cfced2 1px, #fff 1px) 0 14px / 21px 21px;
}

.legend {
  width: 150px;
  margin: 0 0 5px 4px;
  padding: 3px;
  border: 2px solid #666;
  background: #fff;
}

.legend div {
  display: flex;
  align-items: center;
  height: 22px;
}

.legend i {
  width: 20px;
  height: 19px;
  margin-right: 3px;
  border: 2px solid #111;
}

.tx { background: #00f; }
.rx { background: #f00; }

.traffic {
  width: 58px;
  height: 180px;
}

.mark-box {
  position: absolute;
  inset: 30px -9px -9px -16px;
  border: 3px solid #ee1c1c;
  border-radius: 56px;
}

.actions {
  flex: none;
  width: 83px;
  display: flex;
  flex-direction: column;
  gap: 5px;
}

.actions .current {
  border-color: #222;
}

.statusbar {
  height: 29px;
  margin: 0 4px 1px 2px;
  padding-left: 2px;
  line-height: 26px;
  border-top: 2px solid #a8a8a8;
  border-left: 2px solid #a8a8a8;
}
```
